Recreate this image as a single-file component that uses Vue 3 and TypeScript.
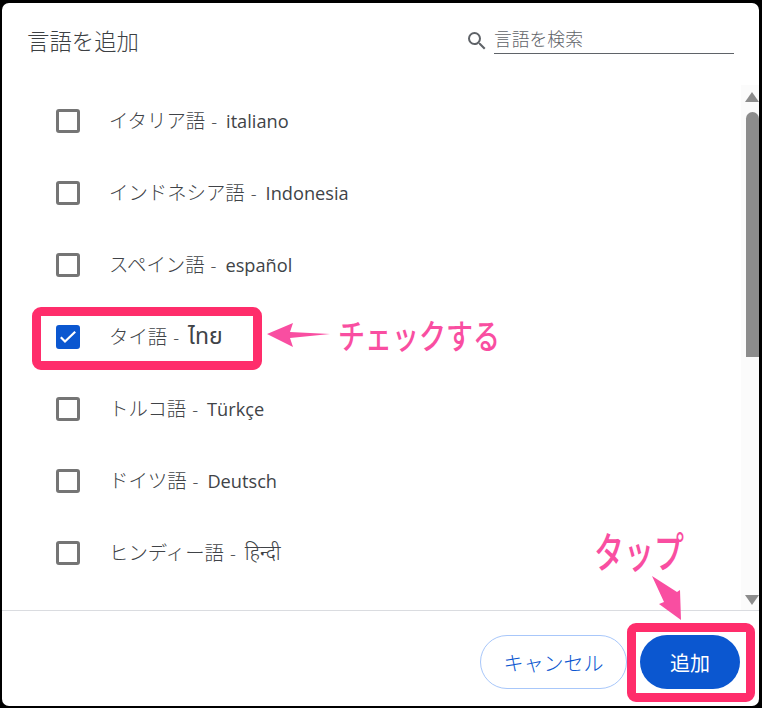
<script setup lang="ts">
interface Lang { jp: string; native: string; kind?: string; checked?: boolean }
const langs: Lang[] = [
  { jp: 'イタリア語', native: 'italiano' },
  { jp: 'インドネシア語', native: 'Indonesia' },
  { jp: 'スペイン語', native: 'español' },
  { jp: 'タイ語', native: 'ไทย', kind: 'thai', checked: true },
  { jp: 'トルコ語', native: 'Türkçe' },
  { jp: 'ドイツ語', native: 'Deutsch' },
  { jp: 'ヒンディー語', native: 'हिन्दी', kind: 'hindi' },
]
</script>

<template>
  <div class="window">
    <div class="dialog">
      <header class="head">
        <h1 class="title">言語を追加</h1>
        <div class="search">
          <svg class="glass" width="24" height="24" viewBox="0 0 24 24" fill="#5f6368"><path d="M15.5 14h-.79l-.28-.27A6.47 6.47 0 0 0 16 9.5 6.5 6.5 0 1 0 9.5 16c1.61 0 3.09-.59 4.23-1.57l.27.28v.79l5 4.99L20.49 19l-4.99-5zm-6 0C7.01 14 5 11.99 5 9.5S7.01 5 9.5 5 14 7.01 14 9.5 11.99 14 9.5 14z"/></svg>
          <div class="field">言語を検索</div>
        </div>
      </header>

      <div class="body">
        <ul class="list">
          <li v-for="l in langs" :key="l.jp" class="row">
            <span class="box" :class="{ on: l.checked }">
              <svg v-if="l.checked" width="18" height="18" viewBox="0 0 18 18" fill="none"><path d="M1.8 9.3l4.2 4.2L16.2 3.7" stroke="#fff" stroke-width="2.2"/></svg>
            </span>
            <span class="label"><span class="jp">{{ l.jp }}</span><span class="dash">-</span><span :class="l.kind">{{ l.native }}</span></span>
          </li>
        </ul>
        <div class="scrollbar">
          <span class="arrow up"></span>
          <span class="track"><span class="thumb"></span></span>
          <span class="arrow down"></span>
        </div>
      </div>

      <footer class="foot">
        <button class="btn cancel">キャンセル</button>
        <button class="btn add">追加</button>
      </footer>
    </div>

    <div class="mark mark-row"></div>
    <div class="mark mark-add"></div>
    <svg class="arrows" width="762" height="708" viewBox="0 0 762 708">
      <path d="M267 334 L293 323 L290 332 L330 334 L290 338 L293 347 Z" fill="#f94ea1"/>
      <path d="M652 576 L677 592 L680 590 L681 620 L659 604 L664 602 Z" fill="#f94ea1"/>
    </svg>
    <div class="note note-check">チェックする</div>
    <div class="note note-tap">タップ</div>
  </div>
</template>

<style>
html, body { margin: 0; padding: 0; background: #000; }
</style>

<style scoped>
.window {
  position: relative;
  width: 762px;
  height: 708px;
  box-sizing: border-box;
  padding: 3px 3px 2px 2px;
  background: #000;
  font-family: "Open Sans", "Noto Sans CJK JP", "Noto Sans Thai", "Noto Sans Devanagari", "DejaVu Sans", sans-serif;
  overflow: hidden;
}
.dialog {
  height: 100%;
  display: flex;
  flex-direction: column;
  background: #fff;
  border-radius: 7px;
  overflow: hidden;
}
.head {
  height: 82px;
  flex: none;
  display: flex;
  justify-content: space-between;
  box-sizing: border-box;
  padding: 22px 25px 0 25px;
}
.title {
  margin: 0;
  font-size: 22.4px;
  font-weight: 300;
  line-height: 34px;
  color: #3c4043;
}
.search {
  display: flex;
  align-items: flex-start;
  gap: 5px;
}
.glass { margin-top: 4px; margin-left: -1px; }
.field {
  width: 240px;
  height: 29px;
  box-sizing: border-box;
  border-bottom: 1px solid #5f6368;
  font-size: 17.8px;
  font-weight: 300;
  line-height: 28px;
  color: #5f6368;
}
.body {
  height: 525px;
  flex: none;
  display: flex;
  justify-content: space-between;
}
.list {
  margin: 0;
  padding: 0;
  list-style: none;
}
.row {
  height: 72px;
  display: flex;
  align-items: center;
  padding-left: 54px;
}
.box {
  width: 24px;
  height: 24px;
  flex: none;
  box-sizing: border-box;
  border: 3px solid #757575;
  border-radius: 3px;
  display: flex;
  align-items: center;
  justify-content: center;
}
.box.on {
  background: #0b57d0;
  border-color: #0b57d0;
}
.label {
  margin-left: 29px;
  height: 28px;
  display: flex;
  align-items: baseline;
  font-size: 18.2px;
  line-height: 28px;
  color: #404347;
  white-space: nowrap;
}
.jp { font-size: 19.4px; font-weight: 300; }
.dash { margin: 0 9px 0 6px; font-weight: 300; }
.thai { font-size: 23px; font-weight: 400; line-height: 20px; }
.hindi { font-size: 20px; font-weight: 300; line-height: 20px; }
.scrollbar {
  width: 18px;
  display: flex;
  flex-direction: column;
  align-items: flex-end;
  background: #fbfbfb;
}
.arrow {
  width: 0;
  height: 0;
  flex: none;
  border-left: 7px solid transparent;
  border-right: 7px solid transparent;
}
.arrow.up {
  margin-top: 7px;
  border-bottom: 10px solid #8c8c8c;
}
.arrow.down {
  margin-bottom: 5px;
  border-top: 10px solid #8c8c8c;
}
.track { flex: 1; width: 13px; }
.thumb {
  display: block;
  width: 13px;
  height: 245px;
  margin-top: 10px;
  background: #8c8c8c;
  border-radius: 7px 7px 0 0;
}
.foot {
  flex: 1;
  display: flex;
  justify-content: flex-end;
  align-items: flex-start;
  gap: 13px;
  box-sizing: border-box;
  padding: 24px 19px 0 0;
  border-top: 1px solid #dadce0;
}
.btn {
  height: 54px;
  border-radius: 27px;
  font: inherit;
  font-size: 20px;
  font-weight: 300;
  padding: 0;
}
.cancel {
  width: 147px;
  background: #fff;
  border: 1px solid #a8c7fa;
  color: #0b57d0;
}
.add {
  width: 100px;
  background: #0b57d0;
  border: none;
  color: #fff;
  font-weight: 400;
}
.mark {
  position: absolute;
  box-sizing: border-box;
  border: 9px solid #ff2d6b;
  border-radius: 9px;
}
.mark-row { left: 32px; top: 307px; width: 230px; height: 63px; }
.mark-add { left: 627px; top: 623px; width: 128px; height: 79px; }
.arrows { position: absolute; left: 0; top: 0; pointer-events: none; }
.note {
  position: absolute;
  color: #f94ea1;
  font-weight: 500;
  white-space: nowrap;
  line-height: 1;
  transform-origin: left top;
}
.note-check { left: 338px; top: 319px; font-size: 27px; transform: scaleY(1.25); }
.note-tap { left: 594px; top: 532px; font-size: 30px; transform: scaleY(1.4); }
</style>
